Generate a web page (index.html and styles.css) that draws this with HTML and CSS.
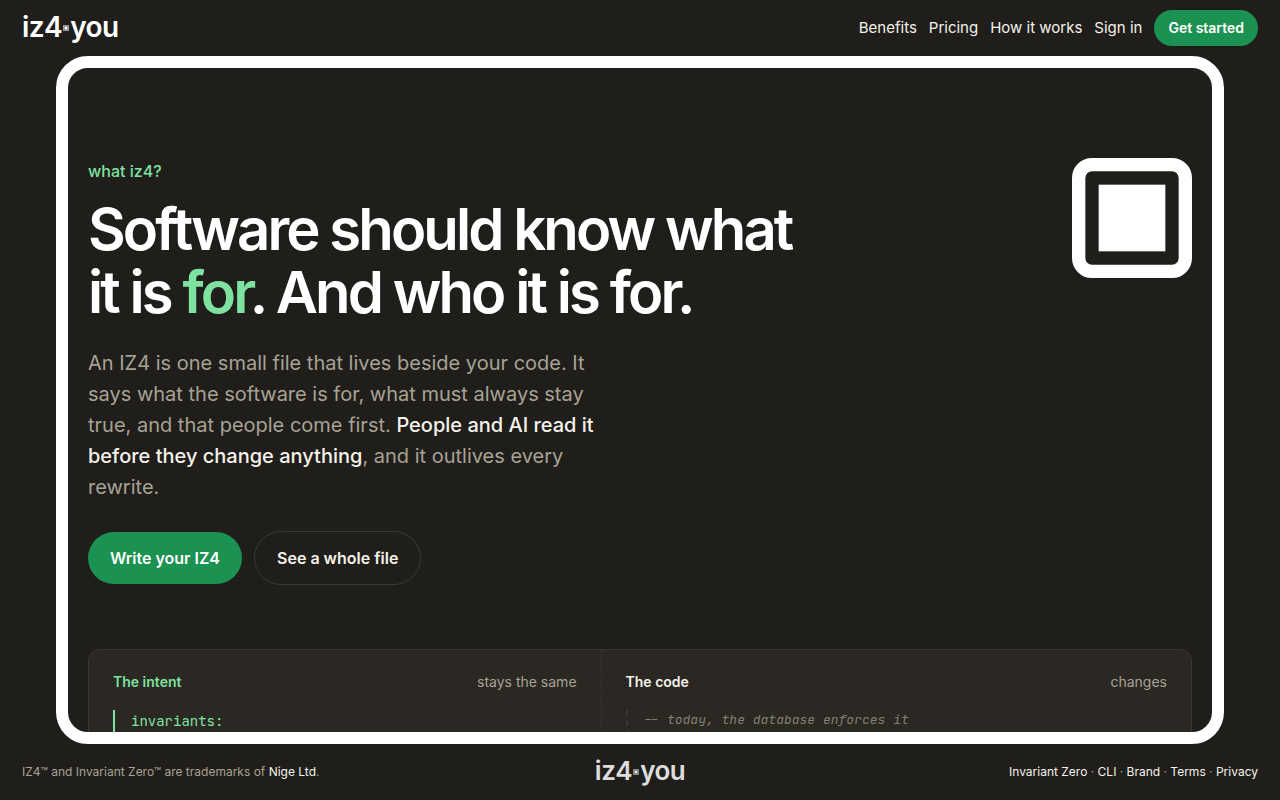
FILE: index.html
```html
<!DOCTYPE html>
<html lang="en">
<head>
  <meta charset="UTF-8" />
  <title>iz4you</title>
  <meta name="viewport" content="width=device-width, initial-scale=1.0" />
  <link rel="stylesheet" href="styles.css">
</head>
<body>
  <header class="bar">
    <a class="logo" href="#" aria-label="iz4you">iz4<svg class="logo-dot" viewBox="0 0 9 9" aria-hidden="true">
      <rect x="0.5" y="0.5" width="8" height="8" rx="1" fill="none" stroke="currentColor" />
      <rect x="2" y="2" width="5" height="5" fill="currentColor" />
    </svg>you</a>
    <nav class="nav">
      <a href="#">Benefits</a>
      <a href="#">Pricing</a>
      <a href="#">How it works</a>
      <a href="#">Sign in</a>
      <a class="btn btn-small btn-primary" href="#">Get started</a>
    </nav>
  </header>

  <main class="frame">
    <section class="hero">
      <div class="hero-text">
        <p class="eyebrow">what iz4?</p>
        <h1>Software should know what it is <em>for</em>. And who it is for.</h1>
        <p class="lead">An IZ4 is one small file that lives beside your code. It says what the software is for, what must always stay true, and that people come first. <strong>People and AI read it before they change anything</strong>, and it outlives every rewrite.</p>
        <div class="actions">
          <a class="btn btn-primary" href="#">Write your IZ4</a>
          <a class="btn btn-outline" href="#">See a whole file</a>
        </div>
      </div>
      <svg class="mark" viewBox="0 0 9 9" aria-hidden="true">
        <rect x="0.5" y="0.5" width="8" height="8" rx="1" fill="none" stroke="currentColor" />
        <rect x="2" y="2" width="5" height="5" fill="currentColor" />
      </svg>
    </section>

    <section class="card">
      <div class="pane pane-intent">
        <div class="pane-head">
          <h2>The intent</h2>
          <span>stays the same</span>
        </div>
        <pre class="code">invariants:</pre>
      </div>
      <div class="pane pane-code">
        <div class="pane-head">
          <h2>The code</h2>
          <span>changes</span>
        </div>
        <pre class="code">-- today, the database enforces it</pre>
      </div>
    </section>
  </main>

  <footer class="bar footer">
    <p class="legal">IZ4™ and Invariant Zero™ are trademarks of <a href="#">Nige Ltd</a>.</p>
    <a class="logo logo-footer" href="#" aria-label="iz4you">iz4<svg class="logo-dot" viewBox="0 0 9 9" aria-hidden="true">
      <rect x="0.5" y="0.5" width="8" height="8" rx="1" fill="none" stroke="currentColor" />
      <rect x="2" y="2" width="5" height="5" fill="currentColor" />
    </svg>you</a>
    <p class="links"><a href="#">Invariant Zero</a> · <a href="#">CLI</a> · <a href="#">Brand</a> · <a href="#">Terms</a> · <a href="#">Privacy</a></p>
  </footer>
</body>
</html>
```

FILE: styles.css
```css
:root {
  --bg: #1f1e1a;
  --panel: #2b2723;
  --line: #3a3833;
  --text: #f5f2ea;
  --muted: #a8a295;
  --green: #1b9152;
  --mint: #7ee2a0;
}
* { box-sizing: border-box; }
body {
  margin: 0;
  height: 100vh;
  display: flex;
  flex-direction: column;
  background: var(--bg);
  color: var(--text);
  font-family: Inter, "Liberation Sans", sans-serif;
  font-size: 16px;
}
a { color: inherit; text-decoration: none; }
h1, h2, p, pre { margin: 0; }

/* top and bottom bars */
.bar {
  flex: none;
  min-height: 56px;
  padding: 0 22px;
  display: flex;
  align-items: center;
  justify-content: space-between;
}
.nav {
  display: flex;
  align-items: center;
  gap: 12px;
  font-size: 15px;
  line-height: 20px;
}
.logo {
  display: inline-flex;
  align-items: center;
  color: #fff;
  font-size: 28px;
  line-height: 32px;
  padding-bottom: 2px;
  font-weight: 600;
  letter-spacing: -0.02em;
}
.logo-dot { width: 6px; height: 6px; margin: 2px 1px 0; }

/* buttons */
.btn {
  display: inline-block;
  padding: 14px 22px;
  border-radius: 999px;
  font-size: 16px;
  line-height: 24px;
  font-weight: 600;
}
.btn-primary { background: var(--green); color: #fff; }
.btn-outline { border: 1px solid var(--line); }
.btn-small { padding: 8px 14px; font-size: 14px; line-height: 20px; }

/* framed scroll area */
.frame {
  flex: 1;
  min-height: 0;
  margin: 0 56px;
  padding: 90px 20px 0;
  border: 12px solid #fff;
  border-radius: 32px;
  overflow: hidden;
}
.hero {
  display: flex;
  justify-content: space-between;
  align-items: flex-start;
  margin-bottom: 64px;
}
.hero-text { max-width: 730px; }
.mark { flex: none; width: 120px; height: 120px; color: #fff; }
.eyebrow {
  color: var(--mint);
  font-weight: 500;
  line-height: 26px;
  margin-bottom: 14px;
}
h1 {
  color: #fff;
  font-size: 58px;
  line-height: 63px;
  font-weight: 600;
  letter-spacing: -0.05em;
  margin-bottom: 24px;
}
h1 em { color: var(--mint); font-style: normal; }
.lead {
  max-width: 520px;
  color: var(--muted);
  font-size: 20px;
  line-height: 31px;
  margin-bottom: 28px;
}
.lead strong { color: var(--text); font-weight: 500; }
.actions { display: flex; align-items: center; gap: 12px; }

/* intent / code card */
.card {
  display: grid;
  grid-template-columns: 1fr 1.15fr;
  min-height: 240px;
  background: var(--panel);
  border: 1px solid var(--line);
  border-radius: 12px;
}
.pane { padding: 24px; }
.pane-intent { border-right: 1px dashed var(--line); }
.pane-head {
  display: flex;
  justify-content: space-between;
  align-items: baseline;
  font-size: 14px;
  line-height: 16px;
  margin-bottom: 20px;
}
.pane-head h2 { font-size: 14px; font-weight: 600; }
.pane-head span { color: var(--muted); }
.code {
  min-height: 160px;
  padding-left: 16px;
  font-family: "JetBrains Mono", "Liberation Mono", monospace;
  font-size: 14px;
  line-height: 22px;
}
.pane-intent h2, .pane-intent .code { color: var(--mint); }
.pane-intent .code { border-left: 2px solid var(--mint); }
.pane-code .code {
  border-left: 2px dashed var(--line);
  color: #857f73;
  font-size: 13px;
  line-height: 20px;
  font-style: italic;
}

/* footer */
.footer { padding-bottom: 2px; font-size: 12px; color: var(--muted); }
.footer a { color: var(--text); }
.legal, .links { flex: 1; }
.links { text-align: right; }
.footer .logo-footer { padding-bottom: 0; font-size: 26px; color: #fff; opacity: 0.85; }
```
